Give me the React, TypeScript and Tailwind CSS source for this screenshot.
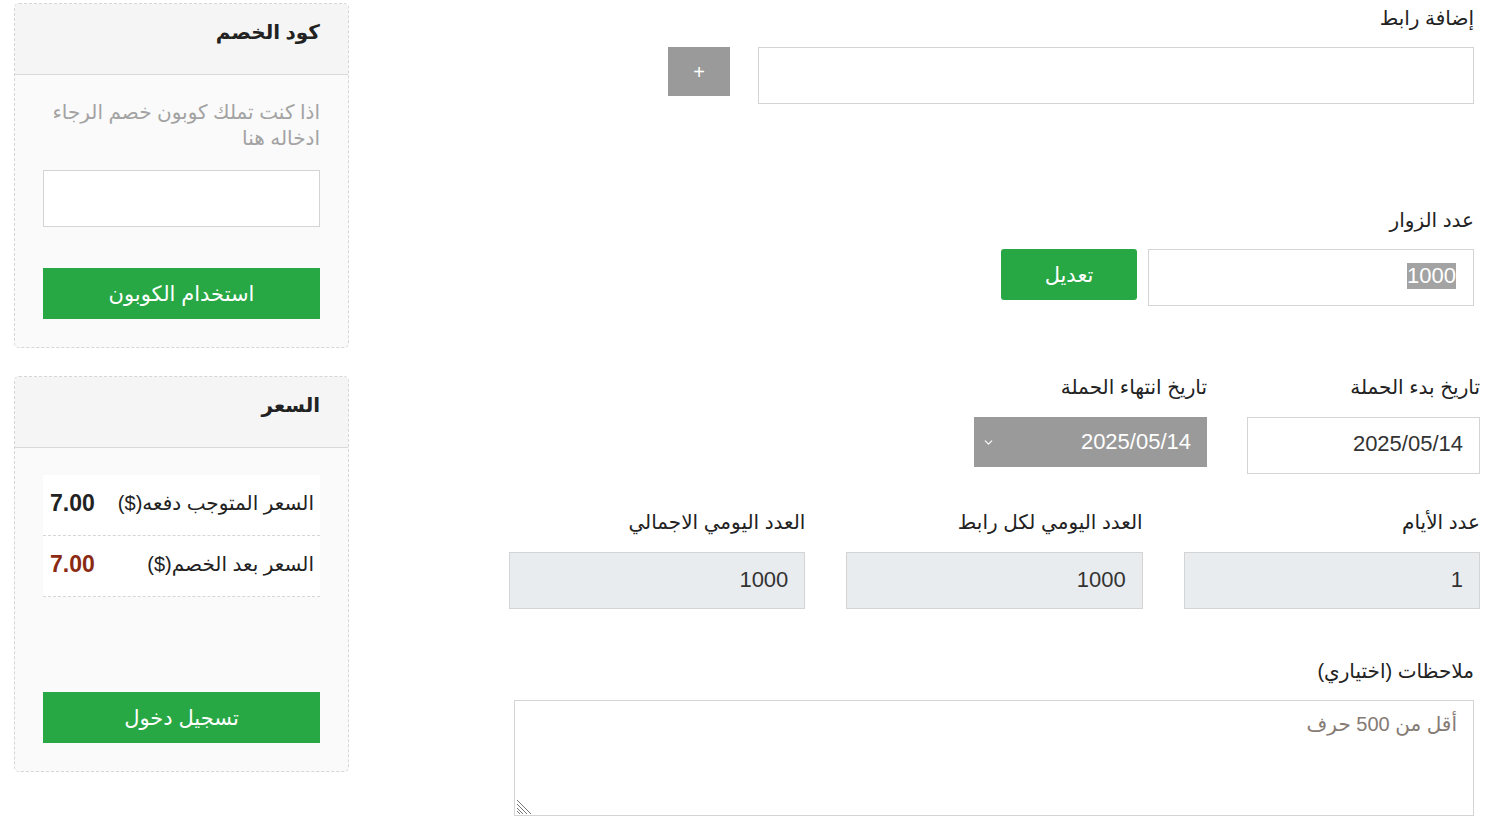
import { ChevronDown } from 'lucide-react'

const font = { fontFamily: '"Liberation Sans", "DejaVu Sans", sans-serif' }

function Label({ children }: { children: React.ReactNode }) {
  return <div className="text-[20px] leading-[26px] text-[#222]">{children}</div>
}

function SideCard({ title, children }: { title: string; children: React.ReactNode }) {
  return (
    <div className="border border-dashed border-[#d6d6d6] rounded-[5px] overflow-hidden bg-[#fafafa]">
      <div className="h-[71px] bg-[#f5f5f5] border-b border-[#d9d9d9] px-[28px] flex items-center">
        <h3 className="text-[20px] font-bold text-[#222] -mt-[14px]">{title}</h3>
      </div>
      <div className="px-[28px] pb-[28px]">{children}</div>
    </div>
  )
}

export default function App() {
  return (
    <div dir="rtl" style={font} className="w-[1493px] h-[820px] bg-white flex justify-between pl-[14px] pr-[13px] overflow-hidden">
      {/* main form */}
      <div className="w-[971px] flex flex-col">
        <div className="pr-[6px] pt-[5px]">
          <Label>إضافة رابط</Label>
          <div className="mt-[16px] flex items-start gap-[28px]">
            <input className="w-[716px] h-[57px] border border-[#d4d4d4] bg-white outline-none" />
            <button className="w-[62px] h-[49px] bg-[#9a9a9a] text-white text-[20px] leading-none">+</button>
          </div>
        </div>

        <div className="pr-[6px] mt-[103px]">
          <Label>عدد الزوار</Label>
          <div className="mt-[16px] flex items-start gap-[11px]">
            <div className="w-[326px] h-[57px] border border-[#d4d4d4] bg-white flex items-center pr-[17px]">
              <span className="bg-[#a3a3a3] text-white text-[22px] leading-[26px] -mt-[4px]">1000</span>
            </div>
            <button className="w-[136px] h-[51px] bg-[#28a745] text-white text-[21px] rounded-[3px]">تعديل</button>
          </div>
        </div>

        <div className="mt-[68px] flex gap-[40px]">
          <div className="w-[233px]">
            <Label>تاريخ بدء الحملة</Label>
            <div className="mt-[17px] h-[57px] border border-[#d4d4d4] bg-white flex items-center px-[16px] text-[22px] text-[#333]">
              <span className="-mt-[4px]">2025/05/14</span>
            </div>
          </div>
          <div className="w-[233px]">
            <Label>تاريخ انتهاء الحملة</Label>
            <div className="mt-[17px] h-[50px] bg-[#9a9a9a] flex items-center justify-between pr-[16px] pl-[8px] text-[22px] text-white">
              <span className="-mt-[1px]">2025/05/14</span>
              <ChevronDown size={13} strokeWidth={2} className="text-white" />
            </div>
          </div>
        </div>

        <div className="mt-[35px] grid grid-cols-3 gap-[41px]">
          {[
            ['عدد الأيام', '1'],
            ['العدد اليومي لكل رابط', '1000'],
            ['العدد اليومي الاجمالي', '1000'],
          ].map(([l, v]) => (
            <div key={l}>
              <Label>{l}</Label>
              <div className="mt-[17px] h-[57px] border border-[#d4d4d4] bg-[#e9ecef] flex items-center px-[16px] text-[22px] text-[#333]">
                <span className="-mt-[3px]">{v}</span>
              </div>
            </div>
          ))}
        </div>

        <div className="pr-[6px] pl-[5px] mt-[49px]">
          <Label>ملاحظات (اختياري)</Label>
          <div className="relative mt-[16px]">
            <textarea
              placeholder="أقل من 500 حرف"
              className="block w-full h-[116px] border border-[#d4d4d4] bg-white outline-none resize-none px-[16px] py-[8px] text-[20px] placeholder:text-[#857a74]"
            />
            <svg className="absolute left-[2px] bottom-[2px]" width="16" height="16" viewBox="0 0 16 16">
              <g stroke="#777" strokeWidth="1">
                <line x1="1" y1="2" x2="15" y2="16" />
                <line x1="1" y1="6" x2="11" y2="16" />
                <line x1="1" y1="10" x2="7" y2="16" />
                <line x1="1" y1="13" x2="4" y2="16" />
              </g>
            </svg>
          </div>
        </div>
      </div>

      {/* sidebar */}
      <div className="w-[335px] pt-[3px] flex flex-col gap-[28px]">
        <SideCard title="كود الخصم">
          <p className="pt-[24px] text-[20px] leading-[26px] text-[#a3a3a3]">اذا كنت تملك كوبون خصم الرجاء ادخاله هنا</p>
          <input className="mt-[19px] block w-full h-[57px] border border-[#d4d4d4] bg-white outline-none" />
          <button className="mt-[41px] w-full h-[51px] bg-[#28a745] text-white text-[21px]">استخدام الكوبون</button>
        </SideCard>

        <SideCard title="السعر">
          <div className="mt-[27px] bg-white">
            <div className="h-[61px] border-b border-dashed border-[#d6d6d6] flex items-center justify-between pr-[6px] pl-[7px]">
              <span className="text-[20px] text-[#222] -mt-[4px]">السعر المتوجب دفعه($)</span>
              <span className="text-[23px] font-bold text-[#222] -mt-[4px]">7.00</span>
            </div>
            <div className="h-[61px] border-b border-dashed border-[#d6d6d6] flex items-center justify-between pr-[6px] pl-[7px]">
              <span className="text-[20px] text-[#222] -mt-[4px]">السعر بعد الخصم($)</span>
              <span className="text-[23px] font-bold text-[#8b2a12] -mt-[4px]">7.00</span>
            </div>
          </div>
          <button className="mt-[95px] w-full h-[51px] bg-[#28a745] text-white text-[21px]">تسجيل دخول</button>
        </SideCard>
      </div>
    </div>
  )
}
